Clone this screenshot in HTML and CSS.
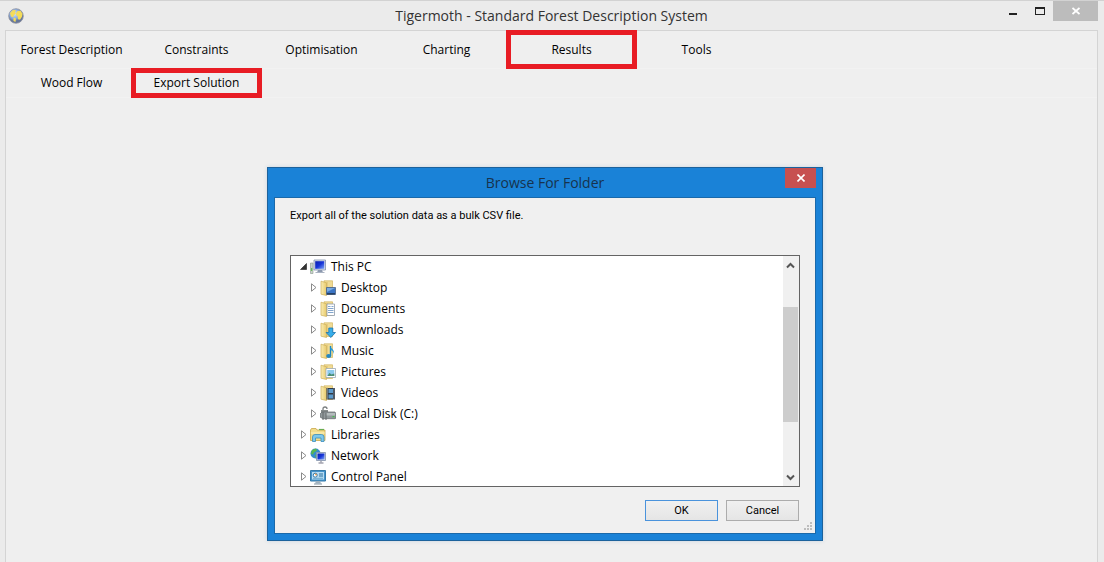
FILE: index.html
```html
<!DOCTYPE html>
<html lang="en">
<head>
<meta charset="utf-8">
<title>Tigermoth - Standard Forest Description System</title>
<link rel="stylesheet" href="styles.css">
</head>
<body>
<svg class="defs" aria-hidden="true">
  <defs>
    <linearGradient id="gold" x2="1"><stop offset="0" stop-color="#faedb4"/><stop offset="1" stop-color="#e8ca6c"/></linearGradient>
    <linearGradient id="screen" x2="1" y2="1"><stop offset="0" stop-color="#0a1fb0"/><stop offset=".5" stop-color="#1634d8"/><stop offset="1" stop-color="#7fa6f5"/></linearGradient>
    <radialGradient id="sea" cx=".4" cy=".35"><stop offset="0" stop-color="#d5e4f8"/><stop offset=".7" stop-color="#86a8dc"/><stop offset="1" stop-color="#66769a"/></radialGradient>
    <symbol id="folder" viewBox="0 0 16 16">
      <path d="M4 .8h8.500v13.700H4z" fill="#f0db95" stroke="#d3b661" stroke-width=".7"/>
      <path d="M1 1.200l5.500 1.600v12.700L1 14.200z" fill="url(#gold)" stroke="#cfb05a" stroke-width=".7"/>
      <path d="M7.200 2v12.300" stroke="#dabe6b" stroke-width=".7"/>
    </symbol>
    <symbol id="arrow" viewBox="0 0 7 9"><path d="M1.500 .8v7.400L6 4.500z" fill="#fff" stroke="#8a8a8a"/></symbol>
  </defs>
</svg>
<main class="window">
  <header class="titlebar">
    <svg class="app-icon" viewBox="0 0 16 16" aria-hidden="true"><circle cx="8" cy="8" r="7.300" fill="url(#sea)" stroke="#8f93a0" stroke-width=".8"/><path d="M2 5l3-3 3 .3-1 2 1 1-2 2-1 2-2-.8zM9.500 3l3-.2 2 3-.5 3-2 3-2-.5-.4-3-1.600-1.300.2-2zM5.500 9.500l2.500 1-.5 3.500-2-1z" fill="#f4dc5a"/></svg>
    <h1 class="app-title">Tigermoth - Standard Forest Description System</h1>
    <div class="window-buttons">
      <button class="window-button" aria-label="Minimise"><svg width="10" height="10" viewBox="0 0 10 10"><path d="M1 7h8v2H1z" fill="#222"/></svg></button>
      <button class="window-button" aria-label="Maximise"><svg width="10" height="10" viewBox="0 0 10 10"><path d="M0 1h10v8H0zM1 3v5h8V3z" fill="#222" fill-rule="evenodd"/></svg></button>
      <button class="window-button app-close" aria-label="Close"><svg width="8" height="8" viewBox="0 0 8 8"><path d="M.5 1l7 6M7.500 1l-7 6" stroke="#fff" stroke-width="1.800"/></svg></button>
    </div>
  </header>
  <div class="frame">
    <nav class="tabs main-tabs" aria-label="Sections">
      <button class="tab">Forest Description</button>
      <button class="tab">Constraints</button>
      <button class="tab">Optimisation</button>
      <button class="tab">Charting</button>
      <button class="tab marked">Results</button>
      <button class="tab">Tools</button>
    </nav>
    <nav class="tabs sub-tabs" aria-label="Results">
      <button class="tab">Wood Flow</button>
      <button class="tab marked">Export Solution</button>
    </nav>
  </div>
</main>

<section class="dialog" role="dialog" aria-labelledby="dialog-title">
  <header class="dialog-bar">
    <h2 class="dialog-title" id="dialog-title">Browse For Folder</h2>
    <button class="dialog-close" aria-label="Close"><svg width="8" height="8" viewBox="0 0 8 8"><path d="M.5 .5l7 7M7.500 .5l-7 7" stroke="#fff" stroke-width="1.600"/></svg></button>
  </header>
  <div class="dialog-body">
    <p class="message">Export all of the solution data as a bulk CSV file.</p>
    <div class="tree-box">
      <ul class="tree">
        <li class="row"><button class="twisty" aria-label="Collapse"><svg width="7" height="7" viewBox="0 0 7 7"><path d="M6.500 .5v6h-6z" fill="#333" stroke="#222" stroke-width=".6"/></svg></button>
          <svg class="icon" viewBox="0 0 16 16"><path d="M.5 4h2.500v10.500H.5z" fill="#c9d2cc" stroke="#8a978d" stroke-width=".6"/><path d="M1.200 9h1v3h-1z" fill="#4dbb3c"/><path d="M4 1h11.500v10H4z" fill="#dbe2ee" stroke="#8290ac" stroke-width=".8"/><path d="M5.200 2.200h9.100v7.600H5.200z" fill="url(#screen)"/><path d="M8 11h4l1 2.500H7z" fill="#8b98ae"/><path d="M5.500 13.500h9" stroke="#aab3c2"/></svg>This PC</li>
        <li class="row child"><button class="twisty" aria-label="Expand"><svg width="7" height="9"><use href="#arrow"/></svg></button>
          <svg class="icon" viewBox="0 0 16 16"><use href="#folder"/><path d="M6.500 7.500h9v7h-9z" fill="#3a74c4" stroke="#4b6387" stroke-width=".8"/><path d="M7 8h8L7 12z" fill="#79abe2"/><path d="M7 13.800h8" stroke="#20344f" stroke-width="1.200"/></svg>Desktop</li>
        <li class="row child"><button class="twisty" aria-label="Expand"><svg width="7" height="9"><use href="#arrow"/></svg></button>
          <svg class="icon" viewBox="0 0 16 16"><use href="#folder"/><path d="M7 3h7.500v11.500H7z" fill="#fff" stroke="#8e9aa8" stroke-width=".8"/><path d="M8 5.500h2.500M11.500 5.500h2M8 7.500h5.500M8 9.500h5.500M8 11.500h5.500" stroke="#638fc0" stroke-width=".8"/></svg>Documents</li>
        <li class="row child"><button class="twisty" aria-label="Expand"><svg width="7" height="9"><use href="#arrow"/></svg></button>
          <svg class="icon" viewBox="0 0 16 16"><use href="#folder"/><path d="M8.800 6h4v4.500h2.700l-4.700 5-4.700-5h2.700z" fill="#38aeea" stroke="#1872ad" stroke-width=".8"/></svg>Downloads</li>
        <li class="row child"><button class="twisty" aria-label="Expand"><svg width="7" height="9"><use href="#arrow"/></svg></button>
          <svg class="icon" viewBox="0 0 16 16"><use href="#folder"/><path d="M10.500 3v10" stroke="#1683c0" stroke-width="1.400"/><path d="M10.500 3c0 2.500 4.700 3.500 3.200 8 0-2.500-1.500-3.500-3.200-4z" fill="#2b9bd5"/><ellipse cx="8.700" cy="13" rx="2.500" ry="1.900" fill="#2488c3"/></svg>Music</li>
        <li class="row child"><button class="twisty" aria-label="Expand"><svg width="7" height="9"><use href="#arrow"/></svg></button>
          <svg class="icon" viewBox="0 0 16 16"><use href="#folder"/><path d="M6 4.500h9.500v9H6z" fill="#fff" stroke="#9aa8b4" stroke-width=".8"/><path d="M7.300 6h7v6h-7z" fill="#8cc9ee"/><path d="M7.300 12l2.200-3 2 1.500 2.800-1V12z" fill="#4c8f76"/></svg>Pictures</li>
        <li class="row child"><button class="twisty" aria-label="Expand"><svg width="7" height="9"><use href="#arrow"/></svg></button>
          <svg class="icon" viewBox="0 0 16 16"><use href="#folder"/><path d="M6.500 3h8.500v11.500H6.500z" fill="#303a47"/><path d="M8.500 4h4.500v4H8.500zM8.500 9.500H13v4H8.500z" fill="#5c9acb"/><path d="M7.500 3.500v11M14 3.500v11" stroke="#d3dae1" stroke-width=".8" stroke-dasharray="1 1"/></svg>Videos</li>
        <li class="row child"><button class="twisty" aria-label="Expand"><svg width="7" height="9"><use href="#arrow"/></svg></button>
          <svg class="icon" viewBox="0 0 16 16"><path d="M3 6V3Q3 1 5 1T7 3" fill="none" stroke="#7b7f80" stroke-width="1.300"/><path d="M1 4h7v4H1z" fill="#858b8b"/><path d="M0 8l2-2h13l1 2v4l-1 .7H3L0 11z" fill="#91999b" stroke="#62696b" stroke-width=".7"/><path d="M6 7h9v2.500H6z" fill="#b4bcbd"/><path d="M12.500 10h2v1.200h-2z" fill="#43c04b"/><path d="M3 6v8M6 7v7" stroke="#646b6c"/></svg>Local Disk (C:)</li>
        <li class="row"><button class="twisty" aria-label="Expand"><svg width="7" height="9"><use href="#arrow"/></svg></button>
          <svg class="icon" viewBox="0 0 16 16"><path d="M.5 3l1-1.500H6l1 1.500h8v10.500H.5z" fill="#f2dc8b" stroke="#c9a74a" stroke-width=".8"/><path d="M9 2.500h5" stroke="#68ad53" stroke-width="1.200"/><path d="M.8 6h14" stroke="#fff3bd"/><path d="M2.500 14.500V10Q2.500 7.500 5 7.500h6.500Q14 7.500 14 10v4.500h-3V11H5.500v3.500z" fill="#7cc7ec" stroke="#3c8dbb" stroke-width=".8"/></svg>Libraries</li>
        <li class="row"><button class="twisty" aria-label="Expand"><svg width="7" height="9"><use href="#arrow"/></svg></button>
          <svg class="icon" viewBox="0 0 16 16"><circle cx="5.500" cy="5.500" r="5" fill="#358bcc"/><path d="M2 2l4-1.500 1 2-3 2-1 2L1 6zM5 7l3-1 1 3-3 1.500z" fill="#58b74e"/><path d="M6.500 4.500h9v8h-9z" fill="#d0d8e6" stroke="#8090aa" stroke-width=".8"/><path d="M7.500 5.500h7v6h-7z" fill="url(#screen)"/><path d="M11 13v1.500M8.500 15h5" stroke="#778"/></svg>Network</li>
        <li class="row"><button class="twisty" aria-label="Expand"><svg width="7" height="9"><use href="#arrow"/></svg></button>
          <svg class="icon" viewBox="0 0 16 16"><path d="M.5 1.500h15v10.500H.5z" fill="#4694cc" stroke="#347aa9"/><path d="M2 3h12v7.500H2z" fill="#b7dcf2"/><circle cx="5.200" cy="6.200" r="2" fill="#fff" stroke="#2e77a8"/><path d="M5.200 6.200V4.400A1.800 1.800 0 0 1 7 6.200z" fill="#ed9235"/><path d="M9 5h4M9 7h4" stroke="#2b719e"/><path d="M3 9.300h10" stroke="#69a9cf"/><path d="M6 12h4l1 2.500H5z" fill="#9eb1bf"/><path d="M4 15h8" stroke="#8295a2"/></svg>Control Panel</li>
      </ul>
      <div class="scrollbar">
        <button class="scroll-button" aria-label="Scroll up"><svg width="9" height="7" viewBox="0 0 9 7"><path d="M1 5.500L4.500 2 8 5.500" fill="none" stroke="#555" stroke-width="2"/></svg></button>
        <div class="track"><div class="thumb"></div></div>
        <button class="scroll-button" aria-label="Scroll down"><svg width="9" height="7" viewBox="0 0 9 7"><path d="M1 1.500L4.500 5 8 1.500" fill="none" stroke="#555" stroke-width="2"/></svg></button>
      </div>
    </div>
    <footer class="actions">
      <button class="action primary">OK</button>
      <button class="action">Cancel</button>
    </footer>
    <svg class="grip" width="8" height="8" viewBox="0 0 8 8" aria-hidden="true"><path d="M6 0h2v2H6zM3 3h2v2H3zM6 3h2v2H6zM0 6h2v2H0zM3 6h2v2H3zM6 6h2v2H6z" fill="#bdbdbd"/></svg>
  </div>
</section>
</body>
</html>
```
FILE: styles.css
```css
* { box-sizing: border-box; }

body {
  margin: 0;
  background: #ebebeb;
  color: #000;
  font: 12px/20px "Open Sans", "Noto Sans", sans-serif;
}

button {
  margin: 0;
  padding: 0;
  border: 0;
  background: none;
  color: inherit;
  font: inherit;
}

svg { display: block; flex: none; }

.defs { position: absolute; width: 0; height: 0; }

.window {
  display: flex;
  flex-direction: column;
  min-height: 100vh;
  padding: 0 6px 0 5px;
  border-top: 1px solid #d2d2d2;
}

.titlebar {
  display: grid;
  grid-template-columns: 144px 1fr 144px;
  align-items: center;
  height: 29px;
}

.app-icon { width: 16px; height: 16px; margin-left: 3px; }

.app-title {
  margin: 0;
  color: #333;
  font-size: 14px;
  font-weight: 400;
  text-align: center;
}

.window-buttons {
  display: flex;
  justify-content: flex-end;
  align-self: start;
}

.window-button {
  display: flex;
  align-items: center;
  justify-content: center;
  width: 27px;
  height: 20px;
}

.app-close { width: 45px; background: #bcbcbc; }

.frame {
  flex: 1;
  border: 1px solid #d4d4d4;
  border-bottom: 0;
  background: #efefef;
}

.tabs {
  display: grid;
  grid-template-columns: repeat(6, 125px);
  padding-left: 3px;
  border-bottom: 1px solid #f2f2f2;
}

.main-tabs { height: 38px; }
.sub-tabs { height: 29px; }

.tab { position: relative; }

.marked::after {
  content: "";
  position: absolute;
  inset: -1px -3px;
  border: 5px solid #e81c24;
}

.dialog {
  position: absolute;
  top: 167px;
  left: 267px;
  width: 556px;
  padding: 0 6px 6px;
  border: 1px solid #1c629c;
  background: #1a82d7;
  box-shadow: 0 0 4px #c8d4df;
}

.dialog-bar {
  display: grid;
  grid-template-columns: 31px 1fr 31px;
  align-items: center;
  height: 29px;
}

.dialog-title {
  grid-column: 2;
  margin: 0;
  color: #17334d;
  font-size: 14px;
  font-weight: 400;
  text-align: center;
}

.dialog-close {
  display: flex;
  align-items: center;
  justify-content: center;
  align-self: start;
  height: 20px;
  background: #c75050;
}

.dialog-body {
  position: relative;
  padding: 8px 15px 12px;
  border: 1px solid #1a69aa;
  background: #f0f0f0;
}

.message {
  margin: 0 0 29px;
  font-family: Roboto, "Liberation Sans", sans-serif;
  font-size: 11px;
}

.tree-box {
  display: flex;
  height: 232px;
  border: 1px solid #646464;
  background: #fff;
}

.tree {
  flex: 1;
  margin: 0;
  padding: 0 0 0 9px;
  overflow: hidden;
  list-style: none;
}

.row {
  display: flex;
  align-items: center;
  height: 21px;
}

.child { padding-left: 10px; }

.twisty {
  display: flex;
  justify-content: center;
  width: 7px;
  margin-right: 3px;
}

.icon { width: 16px; height: 16px; margin-right: 5px; }

.scrollbar {
  display: flex;
  flex-direction: column;
  width: 16px;
  padding-right: 1px;
  background: #f0f0f0;
}

.scroll-button {
  display: flex;
  align-items: center;
  justify-content: center;
  height: 18px;
}

.track { flex: 1; padding-top: 33px; }
.thumb { height: 115px; background: #cdcdcd; }

.actions {
  display: flex;
  justify-content: flex-end;
  gap: 8px;
  margin-top: 13px;
  padding-right: 1px;
}

.action {
  width: 73px;
  height: 21px;
  border: 1px solid #acacac;
  background: linear-gradient(#f0f0f0, #e5e5e5);
  font-family: Roboto, "Liberation Sans", sans-serif;
  font-size: 11px;
  line-height: 19px;
}

.primary { border-color: #4a93dc; }

.grip { position: absolute; right: 3px; bottom: 3px; }
```
